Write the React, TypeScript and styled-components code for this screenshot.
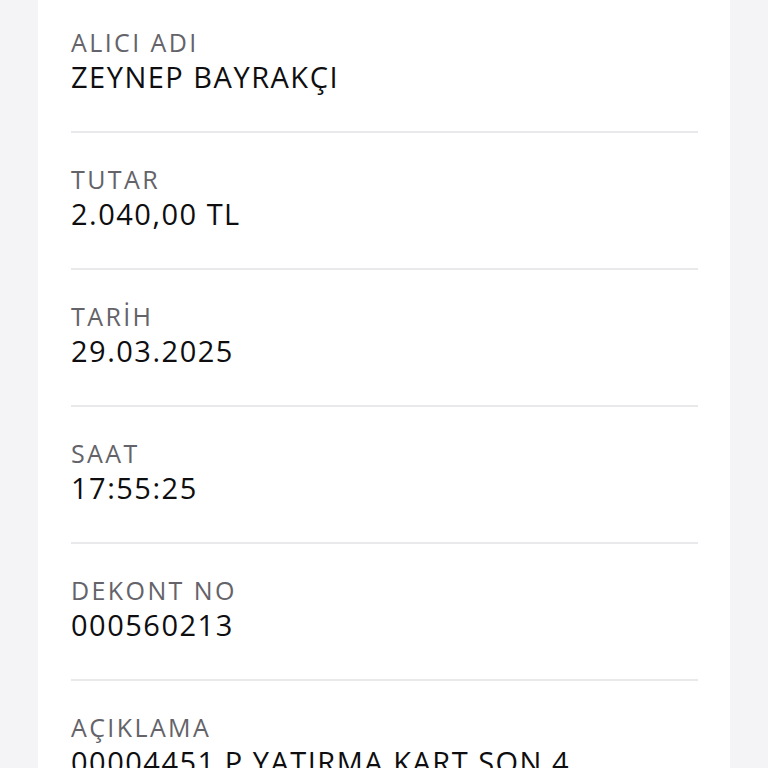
import styled, { createGlobalStyle } from "styled-components";

const GlobalStyle = createGlobalStyle`
  html, body {
    margin: 0;
    padding: 0;
    background: #f4f4f6;
  }
  body {
    font-family: "Open Sans", "Liberation Sans", sans-serif;
    -webkit-font-smoothing: antialiased;
  }
`;

const Page = styled.div`
  height: 768px;
  overflow: hidden;
  padding: 0 38px;
`;

const Card = styled.div`
  background: #ffffff;
  padding: 0 32px 0 33px;
  min-height: 100%;
`;

const Row = styled.div<{ $first?: boolean }>`
  display: flex;
  flex-direction: column;
  gap: 3px;
  padding: ${(p) => (p.$first ? "27px" : "31px")} 0 37px;
  border-bottom: 2px solid #e9e9eb;
`;

const Label = styled.div`
  font-size: 25px;
  line-height: 30px;
  font-weight: 500;
  letter-spacing: 2.4px;
  color: #646369;
  text-transform: uppercase;
`;

const Value = styled.div`
  font-size: 29px;
  line-height: 34px;
  font-weight: 500;
  letter-spacing: 1.5px;
  color: #0e0e10;
  white-space: nowrap;
`;

const rows = [
  { label: "ALICI ADI", value: "ZEYNEP BAYRAKÇI" },
  { label: "TUTAR", value: "2.040,00 TL" },
  { label: "TARİH", value: "29.03.2025" },
  { label: "SAAT", value: "17:55:25" },
  { label: "DEKONT NO", value: "000560213" },
  { label: "AÇIKLAMA", value: "00004451 P YATIRMA KART SON 4" },
];

function App() {
  return (
    <>
      <GlobalStyle />
      <Page>
        <Card>
          {rows.map((r, i) => (
            <Row key={r.label} $first={i === 0}>
              <Label>{r.label}</Label>
              <Value>{r.value}</Value>
            </Row>
          ))}
        </Card>
      </Page>
    </>
  );
}

export default App;
